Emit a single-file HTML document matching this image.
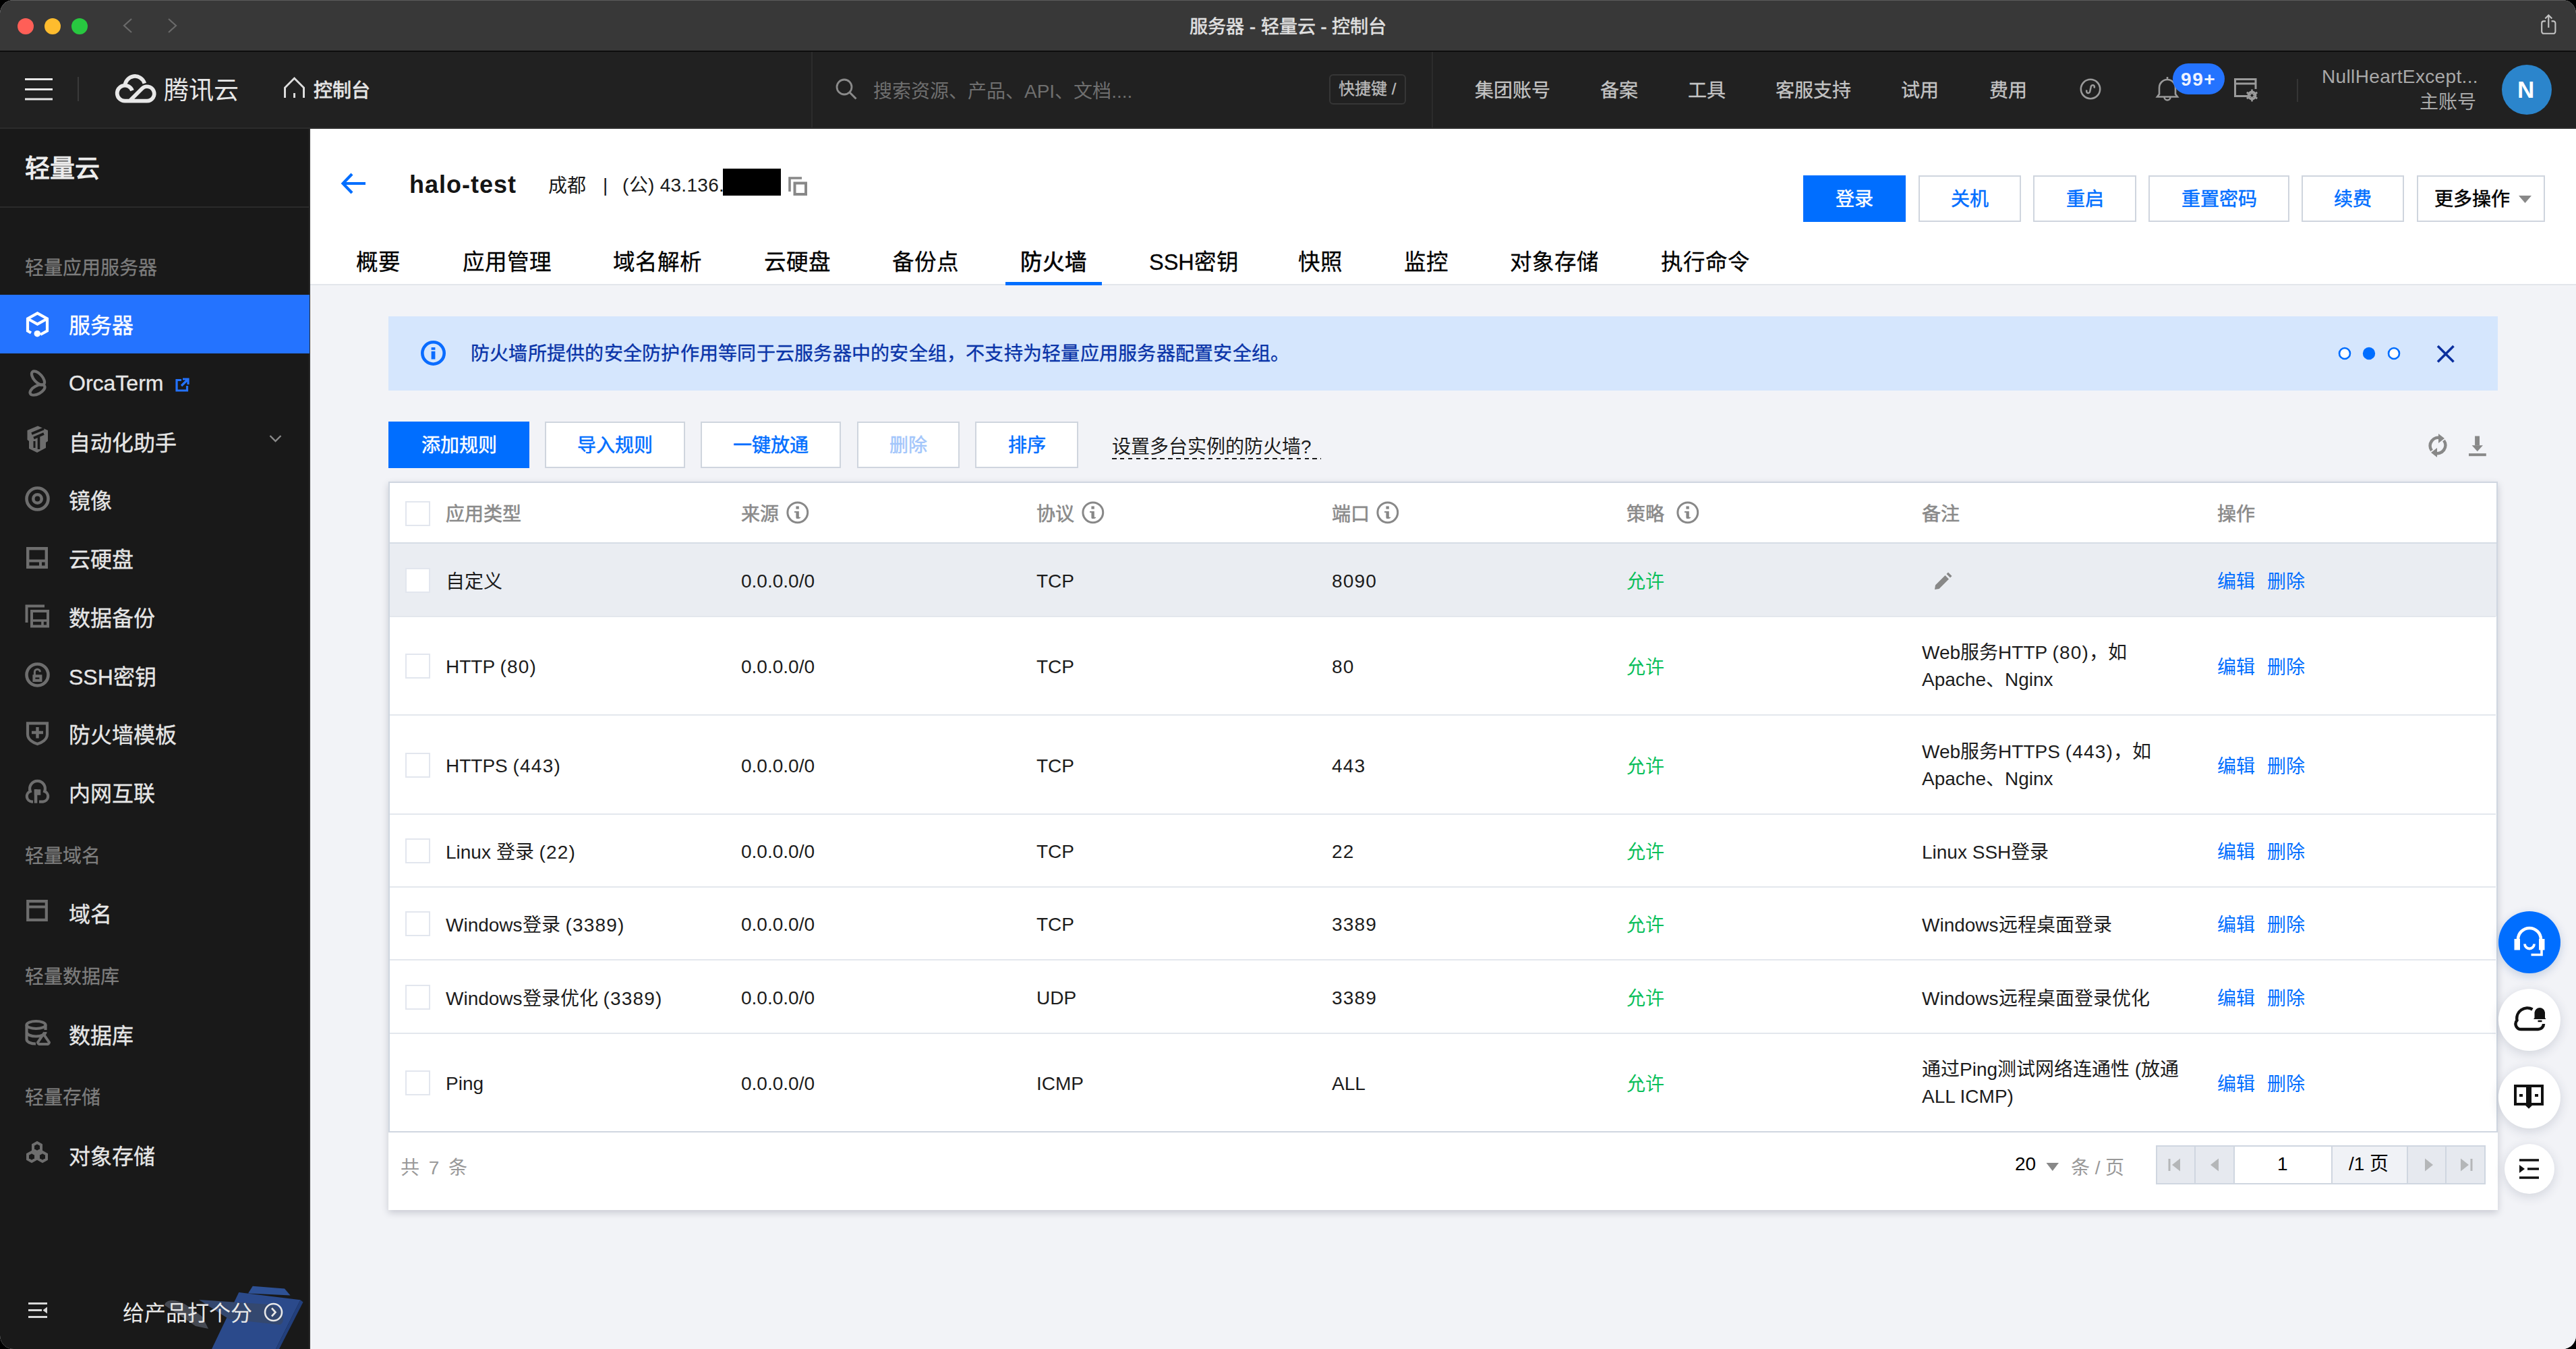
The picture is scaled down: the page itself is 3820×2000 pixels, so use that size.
<!DOCTYPE html>
<html lang="zh-CN">
<head>
<meta charset="utf-8">
<style>
*{box-sizing:border-box;margin:0;padding:0}
html,body{width:3820px;height:2000px;overflow:hidden;background:#000}
body{font-family:"Liberation Sans",sans-serif;position:relative;color:#000;-webkit-text-stroke-width:0}
.a{position:absolute}
.t{position:absolute;white-space:nowrap;line-height:1}
svg{position:absolute;overflow:visible}
/* window */
#win{position:absolute;left:0;top:0;width:3820px;height:2000px;border-radius:20px;overflow:hidden;background:#f2f3f7}
#titlebar{left:0;top:0;width:3820px;height:77px;background:#383838;border-top:1px solid #5c5c5c;border-bottom:2px solid #0d0d0d}
.tl{width:24px;height:24px;border-radius:50%;top:26px}
#topnav{left:0;top:77px;width:3820px;height:113px;background:#212121}
.nav{font-size:28px;color:#c4c4c4;-webkit-text-stroke:0.3px #c4c4c4}
#sidebar{left:0;top:190px;width:460px;height:1810px;background:#191919;border-right:2px solid #2a2a2a}
.grp{font-size:28px;color:#7d7d7d;left:37px;-webkit-text-stroke:0.3px #7d7d7d}
.item{left:0;width:459px;height:87px}
.item .lbl{position:absolute;left:102px;top:30px;font-size:32px;line-height:32px;color:#e8e8e8;white-space:nowrap;-webkit-text-stroke:0.35px currentColor}
.item svg{left:37px;top:25px}
#main{left:460px;top:190px;width:3360px;height:1810px;background:#f2f3f7}

.btn{position:absolute;height:69px;border:2px solid #cfd5de;background:#fff;color:#006eff;font-size:28px;line-height:68px;text-align:center;white-space:nowrap;-webkit-text-stroke:0.5px currentColor}
.btnp{background:#006eff;border-color:#006eff;color:#fff}
.tab{position:absolute;top:373px;font-size:32.5px;line-height:33px;color:#000;white-space:nowrap;-webkit-text-stroke:0.3px #000}
.th{position:absolute;top:749px;font-size:28px;line-height:28px;color:#8a8a8a;-webkit-text-stroke:0.6px #8a8a8a;white-space:nowrap}
.cell{position:absolute;font-size:28px;line-height:28px;color:#1c1c1c;white-space:nowrap}
.grn{color:#0abf5b}
.lnk{color:#006eff}
.cb{position:absolute;left:601px;width:37px;height:37px;border:2px solid #e2e6ee;background:#fff}
.hline{position:absolute;left:578px;width:3123px;height:2px;background:#e3e7ed}
.ii{position:absolute;width:34px;height:34px}
</style>
</head>
<body>
<div id="win">
  <!-- TITLE BAR -->
  <div id="titlebar" class="a">
    <div class="a tl" style="left:26px;background:#ff5f57"></div>
    <div class="a tl" style="left:66px;background:#febc2e"></div>
    <div class="a tl" style="left:106px;background:#28c840"></div>
    <svg width="14" height="22" style="left:182px;top:26px"><path d="M13 1 L2 11 L13 21" fill="none" stroke="#6a6a6a" stroke-width="2.2"/></svg>
    <svg width="14" height="22" style="left:249px;top:26px"><path d="M1 1 L12 11 L1 21" fill="none" stroke="#6a6a6a" stroke-width="2.2"/></svg>
    <div class="t" style="left:1764px;top:26px;font-size:27px;color:#e0e0e0;-webkit-text-stroke:0.6px #e0e0e0;letter-spacing:0.1px">服务器 - 轻量云 - 控制台</div>
    <svg width="28" height="34" style="left:3766px;top:19px"><path d="M9 11.4 H6.2 A3 3 0 0 0 3.2 14.4 V26.8 A3 3 0 0 0 6.2 29.8 H20.4 A3 3 0 0 0 23.4 26.8 V14.4 A3 3 0 0 0 20.4 11.4 H17.6 M13.3 2.5 V21 M8.3 7.5 L13.3 2.5 L18.3 7.5" fill="none" stroke="#c4c4c4" stroke-width="2.1"/></svg>
  </div>
  <!-- TOP NAV -->
  <div id="topnav" class="a">
    <svg width="44" height="36" style="left:36px;top:37px"><path d="M1 3.5H42 M1 18.5H42 M1 33H42" stroke="#e6e6e6" stroke-width="3.2"/></svg>
    <div class="a" style="left:115px;top:37px;width:2px;height:36px;background:#3a3a3a"></div>
    <svg width="80" height="60" style="left:160px;top:23px"><path d="M36 34.3 A11.5 11.5 0 1 0 25 49.7 H58 A10.7 10.7 0 1 0 50.43 31.43 L32.16 49.7 M25.3 27.7 A14.8 14.8 0 0 1 54.3 23.6" fill="none" stroke="#e8e8e8" stroke-width="5.7"/></svg>
    <div class="t" style="left:243px;top:39px;font-size:37px;color:#e8e8e8">腾讯云</div>
    <svg width="36" height="34" style="left:419px;top:37px"><path d="M3.5 31 V16 L17.5 2 L31.5 16 V31 M17.5 24 V31" fill="none" stroke="#dcdcdc" stroke-width="3"/></svg>
    <div class="t" style="left:465px;top:44px;font-size:28px;color:#e6e6e6;-webkit-text-stroke:0.8px #e6e6e6">控制台</div>
    <div class="a" style="left:1203px;top:0;width:2px;height:113px;background:#2c2c2c"></div>
    <svg width="34" height="34" style="left:1239px;top:39px"><circle cx="13" cy="13" r="11" fill="none" stroke="#8a8a8a" stroke-width="2.8"/><path d="M21 21 L30.5 30.5" stroke="#8a8a8a" stroke-width="3"/></svg>
    <div class="t" style="left:1295px;top:45px;font-size:28px;color:#6f6f6f">搜索资源、产品、API、文档....</div>
    <div class="a" style="left:1971px;top:33px;width:114px;height:45px;border:2px solid #363636;border-radius:6px"></div>
    <div class="t" style="left:1985px;top:43px;font-size:24px;color:#bbbbbb;-webkit-text-stroke:0.3px #bbb">快捷键 /</div>
    <div class="a" style="left:2123px;top:0;width:2px;height:113px;background:#2c2c2c"></div>
    <div class="t nav" style="left:2187px;top:44px">集团账号</div>
    <div class="t nav" style="left:2373px;top:44px">备案</div>
    <div class="t nav" style="left:2503px;top:44px">工具</div>
    <div class="t nav" style="left:2633px;top:44px">客服支持</div>
    <div class="t nav" style="left:2819px;top:44px">试用</div>
    <div class="t nav" style="left:2950px;top:44px">费用</div>
    <svg width="34" height="34" style="left:3083px;top:38px"><circle cx="17" cy="17" r="14.2" fill="none" stroke="#9a9a9a" stroke-width="2.6"/><path d="M11.5 18.5 C9.5 23.5 16 25 16.5 19.5 L17.5 14.5 C18 9.5 24.5 10.5 22.5 15.5" fill="none" stroke="#9a9a9a" stroke-width="2.6"/></svg>
    <svg width="34" height="40" style="left:3197px;top:35px"><path d="M17 2 V5.5 M5 27.5 V18 A12 12 0 0 1 29 18 V27.5 L32 31.5 H2 L5 27.5 Z M12.5 32 A4.5 4.5 0 0 0 21.5 32" fill="none" stroke="#9a9a9a" stroke-width="2.6"/></svg>
    <div class="a" style="left:3222px;top:17px;width:77px;height:46px;border-radius:23px;background:#2473ff"></div>
    <div class="t" style="left:3234px;top:27px;font-size:28px;font-weight:bold;color:#eef3ff;letter-spacing:1.6px">99+</div>
    <svg width="40" height="36" style="left:3311px;top:37px"><path d="M25 28.5 H3.5 V3.5 H34 V18 M3.5 10 H34" fill="none" stroke="#9a9a9a" stroke-width="3"/><circle cx="28.5" cy="27.5" r="5.2" fill="none" stroke="#9a9a9a" stroke-width="3.4"/><path d="M28.5 18.5 V36.5 M20.7 23 L36.3 32 M20.7 32 L36.3 23" stroke="#9a9a9a" stroke-width="2.6"/><circle cx="28.5" cy="27.5" r="2" fill="#212121"/></svg>
    <div class="a" style="left:3406px;top:40px;width:2px;height:34px;background:#353535"></div>
    <div class="t" style="left:3443px;top:23px;font-size:28px;color:#a9a9a9;letter-spacing:0.35px">NullHeartExcept...</div>
    <div class="t" style="left:3588px;top:61px;font-size:28px;color:#a9a9a9">主账号</div>
    <div class="a" style="left:3710px;top:19px;width:74px;height:74px;border-radius:50%;background:#2b85cc"></div>
    <div class="t" style="left:3733px;top:38px;font-size:35px;font-weight:bold;color:#fff">N</div>
  </div>
  <!-- SIDEBAR -->
  <div id="sidebar" class="a">
    
    <div class="t" style="left:37px;top:42px;font-size:37px;font-weight:bold;color:#ececec">轻量云</div>
    <div class="a" style="left:0;top:116px;width:459px;height:2px;background:#2a2a2a"></div>
    <div class="t grp" style="top:194px">轻量应用服务器</div>
    <div class="a item" style="top:247.00px;background:#2473ff;"><svg width="40" height="44" style="left:35px;top:22px"><path d="M11 34.5 L6 31.5 V13.5 L20.5 5.5 L35 13.5 V31.5 L25 37 M6 13.5 L20.5 21.5 L35 13.5" fill="none" stroke="#fff" stroke-width="4.2" stroke-linejoin="miter"/><circle cx="20.3" cy="35.7" r="4.8" fill="#fff"/></svg><div class="lbl" style="color:#ffffff">服务器</div></div>
    <div class="a item" style="top:333.75px;"><svg width="40" height="44" style="left:38px;top:21px"><ellipse cx="18.5" cy="15.5" rx="12.5" ry="6.2" transform="rotate(48 18.5 15.5)" fill="none" stroke="#6e6e6e" stroke-width="4.2"/><ellipse cx="17.5" cy="33" rx="12" ry="6" transform="rotate(-28 17.5 33)" fill="none" stroke="#6e6e6e" stroke-width="4.2"/></svg><div class="lbl" style="color:#e6e6e6;top:28px">OrcaTerm</div><svg width="22" height="22" style="left:259px;top:36px"><path d="M10 3.5 H3 V19 H18.5 V12" fill="none" stroke="#2473ff" stroke-width="3.2"/><path d="M12 2 H20 V10 M20 2 L10 12" fill="none" stroke="#2473ff" stroke-width="3.2"/></svg></div>
    <div class="a item" style="top:420.50px;"><svg width="40" height="44" style="left:35px;top:19px"><path d="M21 1.5 L36 8 V24 L33 26 V34 L20 41 L8 35 V24 L5.5 22 V8 Z" fill="#6e6e6e"/><path d="M12 13 L30 5.5 M15 19.5 L30 13 M22.5 16.5 V36" stroke="#191919" stroke-width="3.6"/><path d="M16 24 V34" stroke="#191919" stroke-width="3"/></svg><div class="lbl" style="color:#e6e6e6">自动化助手</div><svg width="20" height="14" style="left:399px;top:33px"><path d="M1.5 2 L9.5 10 L17.5 2" fill="none" stroke="#8a8a8a" stroke-width="2.4"/></svg></div>
    <div class="a item" style="top:507.25px;"><svg width="40" height="40" style="left:36px;top:24px"><circle cx="19.5" cy="18.5" r="16" fill="none" stroke="#6e6e6e" stroke-width="4.6"/><circle cx="19.5" cy="18.5" r="6.2" fill="none" stroke="#6e6e6e" stroke-width="4.6"/></svg><div class="lbl" style="color:#e6e6e6">镜像</div></div>
    <div class="a item" style="top:594.00px;"><svg width="40" height="40" style="left:36px;top:25px"><path d="M5.2 4.2 H32.8 V31.8 H5.2 Z" fill="none" stroke="#6e6e6e" stroke-width="4.4"/><path d="M5 22.5 H33 M24 22.5 V31" stroke="#6e6e6e" stroke-width="4"/></svg><div class="lbl" style="color:#e6e6e6">云硬盘</div></div>
    <div class="a item" style="top:680.75px;"><svg width="40" height="40" style="left:36px;top:24px"><path d="M3.5 28 V3.5 H30" fill="none" stroke="#6e6e6e" stroke-width="4"/><path d="M11 11 H35 V33.5 H11 Z" fill="none" stroke="#6e6e6e" stroke-width="4"/><path d="M11 25 H35 M27 25 V33" stroke="#6e6e6e" stroke-width="3.6"/></svg><div class="lbl" style="color:#e6e6e6">数据备份</div></div>
    <div class="a item" style="top:767.50px;"><svg width="40" height="40" style="left:36px;top:24px"><circle cx="19.5" cy="18.5" r="16" fill="none" stroke="#6e6e6e" stroke-width="4.6"/><path d="M15.4 19 V14.2 A4 4 0 0 1 23.4 14.2" fill="none" stroke="#6e6e6e" stroke-width="3"/><rect x="12.4" y="18.3" width="14" height="10.6" fill="#6e6e6e"/><rect x="16.4" y="22.4" width="6" height="2.4" fill="#191919"/></svg><div class="lbl" style="color:#e6e6e6">SSH密钥</div></div>
    <div class="a item" style="top:854.25px;"><svg width="40" height="40" style="left:36px;top:25px"><path d="M5 3.3 H34 V19.5 C34 28 25 32.5 19.5 34 C14 32.5 5 28 5 19.5 Z" fill="none" stroke="#6e6e6e" stroke-width="4.2"/><path d="M11 17 H28 M19.5 9 V25.5" stroke="#6e6e6e" stroke-width="4.4"/></svg><div class="lbl" style="color:#e6e6e6">防火墙模板</div></div>
    <div class="a item" style="top:941.00px;"><svg width="40" height="40" style="left:36px;top:23px"><path d="M13 34.6 H11.3 A8 8 0 0 1 8.8 19.2 A11.4 11.4 0 1 1 30.2 19.2 A8 8 0 0 1 27.7 34.6 H22" fill="none" stroke="#6e6e6e" stroke-width="4.2"/><rect x="14.8" y="16.3" width="9.5" height="8.5" fill="#6e6e6e"/><rect x="14.8" y="16.3" width="4.5" height="20.4" fill="#6e6e6e"/></svg><div class="lbl" style="color:#e6e6e6">内网互联</div></div>
    <div class="t grp" style="top:1066px">轻量域名</div>
    <div class="a item" style="top:1120px;"><svg width="40" height="40" style="left:36px;top:23px"><path d="M5.2 3.2 H32.8 V30.8 H5.2 Z M5 11.5 H33" fill="none" stroke="#6e6e6e" stroke-width="4.2"/><circle cx="10.5" cy="7.3" r="1.6" fill="#191919"/><circle cx="15.5" cy="7.3" r="1.6" fill="#191919"/></svg><div class="lbl" style="color:#e6e6e6">域名</div></div>
    <div class="t grp" style="top:1245px">轻量数据库</div>
    <div class="a item" style="top:1300px;"><svg width="40" height="40" style="left:36px;top:22px"><ellipse cx="17.5" cy="7.5" rx="14" ry="5.5" fill="none" stroke="#6e6e6e" stroke-width="4.2"/><path d="M3.5 7.5 V29 C3.5 33 10 35.5 17 35.5 M31.5 7.5 V15 M3.5 18 C3.5 22 10 24.5 17.5 24.5 C25 24.5 31.5 22 31.5 18" fill="none" stroke="#6e6e6e" stroke-width="4.2"/><path d="M28.5 21 L37 33.5 A3 3 0 0 1 35 36 H22 A3 3 0 0 1 20 33.5 Z" fill="none" stroke="#6e6e6e" stroke-width="4"/></svg><div class="lbl" style="color:#e6e6e6">数据库</div></div>
    <div class="t grp" style="top:1424px">轻量存储</div>
    <div class="a item" style="top:1479px;"><svg width="40" height="40" style="left:36px;top:23px"><path d="M19 2 L25 5.5 V12.5 L19 16 L13 12.5 V5.5 Z M11 16 L17 19.5 V26.5 L11 30 L5 26.5 V19.5 Z M27 16 L33 19.5 V26.5 L27 30 L21 26.5 V19.5 Z" fill="none" stroke="#6e6e6e" stroke-width="4"/></svg><div class="lbl" style="color:#e6e6e6">对象存储</div></div>
    <svg width="40" height="30" style="left:40px;top:1740px"><path d="M2 2.5 H30 M2 12.5 H22 M2 22.5 H30" stroke="#d8d8d8" stroke-width="3"/><path d="M30 7.5 L23.5 12.5 L30 17.5 Z" fill="#d8d8d8"/></svg>
    <svg width="240" height="110" style="left:220px;top:1700px"><path d="M134.2 26 L225.5 37.3 L189 110 L94 110 Z" fill="#2b4a8b"/><path d="M225.5 37.3 L229.5 40.5 L194 110 L189 110 Z" fill="#223f7c"/><path d="M154.7 16.8 L202 20.5 L210.5 30.5 L148 27.5 Z" fill="#2e5195"/><path d="M75 37 L180 44 C200 46 205 70 195 74 L120 66 Z" fill="#34486f"/><path d="M24 45 C26 36 40 36 55 44 L80 62 L89 80 L70 76 Z" fill="#464a53"/></svg>
    <div class="t" style="left:182px;top:1741px;font-size:32px;color:#e8e8e8">给产品打个分</div>
    <svg width="32" height="32" style="left:390px;top:1740px"><circle cx="15.5" cy="15.5" r="12.5" fill="none" stroke="#e8e8e8" stroke-width="2.6"/><path d="M13 9.5 L18.5 15.5 L13 21.5" fill="none" stroke="#e8e8e8" stroke-width="2.6"/></svg>
  </div>
  <!-- MAIN -->
  <div id="main" class="a"></div>
  <div class="a" style="left:460px;top:190px;width:3360px;height:233px;background:#fff;border-bottom:2px solid #e3e6eb"></div>
  <div class="a" style="left:0;top:189px;width:3820px;height:2px;background:#2c2c2c"></div>
  <svg width="40" height="36" style="left:505px;top:254px"><path d="M37 18 H4 M17 4 L3.5 18 L17 32" fill="none" stroke="#006eff" stroke-width="4.2"/></svg>
  <div class="t" style="left:607px;top:256px;font-size:36px;font-weight:bold;letter-spacing:1px;color:#151515">halo-test</div>
  <div class="t" style="left:813px;top:262px;font-size:28px;color:#1a1a1a">成都</div>
  <div class="t" style="left:894px;top:261px;font-size:28px;color:#1a1a1a">|</div>
  <div class="t" style="left:923px;top:261px;font-size:28px;color:#1a1a1a;letter-spacing:0.3px">(公) 43.136.</div>
  <div class="a" style="left:1072px;top:250px;width:86px;height:40px;background:#000"></div>
  <svg width="30" height="30" style="left:1168px;top:261px"><path d="M3 23 V3 H21" fill="none" stroke="#888" stroke-width="3.6"/><path d="M10.5 10.5 H27 V27 H10.5 Z" fill="none" stroke="#888" stroke-width="4"/></svg>
  <div class="btn btnp" style="left:2674px;top:260px;width:152px">登录</div>
  <div class="btn" style="left:2845px;top:260px;width:152px">关机</div>
  <div class="btn" style="left:3015px;top:260px;width:153px">重启</div>
  <div class="btn" style="left:3186px;top:260px;width:209px">重置密码</div>
  <div class="btn" style="left:3413px;top:260px;width:152px">续费</div>
  <div class="btn" style="left:3584px;top:260px;width:190px;color:#000;text-align:left;padding-left:24px">更多操作</div>
  <svg width="20" height="12" style="left:3735px;top:290px"><path d="M0 0 H19 L9.5 11 Z" fill="#888"/></svg>
  <div class="tab" style="left:528px">概要</div>
  <div class="tab" style="left:686px">应用管理</div>
  <div class="tab" style="left:909px">域名解析</div>
  <div class="tab" style="left:1133px">云硬盘</div>
  <div class="tab" style="left:1323px">备份点</div>
  <div class="tab" style="left:1513px;-webkit-text-stroke:0.7px #000">防火墙</div>
  <div class="tab" style="left:1704px">SSH密钥</div>
  <div class="tab" style="left:1925px">快照</div>
  <div class="tab" style="left:2082px">监控</div>
  <div class="tab" style="left:2239px">对象存储</div>
  <div class="tab" style="left:2463px">执行命令</div>
  <div class="a" style="left:1491px;top:418px;width:143px;height:5px;background:#006eff"></div>
  <!-- banner -->
  <div class="a" style="left:576px;top:469px;width:3128px;height:110px;background:#d5e6fd"></div>
  <svg width="40" height="40" style="left:623px;top:504px"><circle cx="19.5" cy="19.5" r="16.2" fill="none" stroke="#0a6cff" stroke-width="4.6"/><rect x="16.6" y="11" width="5.8" height="3.8" fill="#0a6cff"/><rect x="16.6" y="16.8" width="5.8" height="11.8" fill="#0a6cff"/></svg>
  <div class="t" style="left:698px;top:511px;font-size:28px;color:#0a34a8;letter-spacing:0.24px;-webkit-text-stroke:0.4px #0a34a8">防火墙所提供的安全防护作用等同于云服务器中的安全组，不支持为轻量应用服务器配置安全组。</div>
  <svg width="100" height="24" style="left:3466px;top:512px"><circle cx="11" cy="12" r="8" fill="#fff" stroke="#006eff" stroke-width="2.6"/><circle cx="47" cy="12" r="9.2" fill="#006eff"/><circle cx="84" cy="12" r="8" fill="#fff" stroke="#006eff" stroke-width="2.6"/></svg>
  <svg width="28" height="28" style="left:3613px;top:511px"><path d="M2 2 L25.5 25.5 M25.5 2 L2 25.5" stroke="#0b2f9e" stroke-width="3.6"/></svg>
  <!-- toolbar -->
  <div class="btn btnp" style="left:576px;top:625px;width:209px">添加规则</div>
  <div class="btn" style="left:808px;top:625px;width:208px">导入规则</div>
  <div class="btn" style="left:1039px;top:625px;width:208px">一键放通</div>
  <div class="btn" style="left:1271px;top:625px;width:152px;color:#a3c6fb">删除</div>
  <div class="btn" style="left:1446px;top:625px;width:153px">排序</div>
  <div class="t" style="left:1649px;top:649px;font-size:28px;color:#1a1a1a">设置多台实例的防火墙?</div>
  <div class="a" style="left:1649px;top:679px;width:310px;height:2px;background:repeating-linear-gradient(90deg,#1a1a1a 0 6.6px,transparent 6.6px 11.9px)"></div>
  <svg width="34" height="40" style="left:3598px;top:641px"><path d="M8 27 A12 12 0 0 1 21.5 8.5" fill="none" stroke="#888" stroke-width="4.6"/><path d="M18 2 L27 9 L18 16 Z" fill="#888"/><path d="M26 12 A12 12 0 0 1 12.5 30.5" fill="none" stroke="#888" stroke-width="4.6"/><path d="M16 23 L7 30 L16 37 Z" fill="#888"/></svg>
  <svg width="32" height="34" style="left:3658px;top:644px"><rect x="12.1" y="2.5" width="6.9" height="14" fill="#888"/><path d="M7.6 16.2 H23.9 L15.75 25.2 Z" fill="#888"/><rect x="3" y="28.2" width="25.8" height="4" fill="#888"/></svg>
  <!-- table card -->
  <div class="a" style="left:576px;top:714px;width:3128px;height:1080px;background:#fff;box-shadow:0 4px 10px rgba(54,58,80,0.22)"></div>
  <div class="a" style="left:576px;top:714px;width:3128px;height:965px;border:2px solid #cfd6e0;border-bottom:2px solid #cfd6e0"></div>
  <div class="a" style="left:578px;top:806px;width:3124px;height:108px;background:#eaedf2"></div>
  <div class="a" style="left:578px;top:804px;width:3124px;height:2px;background:#d6dce5"></div>
  <div class="cb" style="top:743px"></div>
  <div class="th" style="left:661px">应用类型</div>
  <div class="th" style="left:1099px">来源</div><svg width="36" height="36" style="left:1166px;top:743px"><circle cx="16.8" cy="16.8" r="14.9" fill="none" stroke="#888" stroke-width="3"/><rect x="14.4" y="7.5" width="4.4" height="4.2" fill="#888"/><path d="M12 14.9 H18.8 V22.5 C18.8 24 19.5 24.3 21.1 23.6 V24.8 C20 26 17.5 26.2 15.6 25.9 C14.7 25.7 14.4 25 14.4 24 V16.9 H12 Z" fill="#888"/></svg>
  <div class="th" style="left:1537px">协议</div><svg width="36" height="36" style="left:1604px;top:743px"><circle cx="16.8" cy="16.8" r="14.9" fill="none" stroke="#888" stroke-width="3"/><rect x="14.4" y="7.5" width="4.4" height="4.2" fill="#888"/><path d="M12 14.9 H18.8 V22.5 C18.8 24 19.5 24.3 21.1 23.6 V24.8 C20 26 17.5 26.2 15.6 25.9 C14.7 25.7 14.4 25 14.4 24 V16.9 H12 Z" fill="#888"/></svg>
  <div class="th" style="left:1975px">端口</div><svg width="36" height="36" style="left:2041px;top:743px"><circle cx="16.8" cy="16.8" r="14.9" fill="none" stroke="#888" stroke-width="3"/><rect x="14.4" y="7.5" width="4.4" height="4.2" fill="#888"/><path d="M12 14.9 H18.8 V22.5 C18.8 24 19.5 24.3 21.1 23.6 V24.8 C20 26 17.5 26.2 15.6 25.9 C14.7 25.7 14.4 25 14.4 24 V16.9 H12 Z" fill="#888"/></svg>
  <div class="th" style="left:2412px">策略</div><svg width="36" height="36" style="left:2486px;top:743px"><circle cx="16.8" cy="16.8" r="14.9" fill="none" stroke="#888" stroke-width="3"/><rect x="14.4" y="7.5" width="4.4" height="4.2" fill="#888"/><path d="M12 14.9 H18.8 V22.5 C18.8 24 19.5 24.3 21.1 23.6 V24.8 C20 26 17.5 26.2 15.6 25.9 C14.7 25.7 14.4 25 14.4 24 V16.9 H12 Z" fill="#888"/></svg>
  <div class="th" style="left:2850px">备注</div>
  <div class="th" style="left:3288px">操作</div>
  <div class="cb" style="top:842px"></div>
  <div class="cell" style="left:661px;top:849px">自定义</div>
  <div class="cell" style="left:1099px;top:848px">0.0.0.0/0</div>
  <div class="cell" style="left:1537px;top:848px">TCP</div>
  <div class="cell" style="left:1975px;top:848px"><span style="letter-spacing:1.2px">8090</span></div>
  <div class="cell grn" style="left:2412px;top:849px">允许</div>
  <svg width="30" height="30" style="left:2866px;top:847px"><path d="M3 27 L4 20.5 L18.5 6 L24 11.5 L9.5 26 Z M20.5 4 L23 1.5 L28.5 7 L26 9.5 Z" fill="#888"/></svg>
  <div class="cell lnk" style="left:3288px;top:849px">编辑</div>
  <div class="cell lnk" style="left:3362px;top:849px">删除</div>
  <div class="hline" style="top:913px"></div>
  <div class="cb" style="top:969px"></div>
  <div class="cell" style="left:661px;top:975px">HTTP <span style="letter-spacing:1.2px">(80)</span></div>
  <div class="cell" style="left:1099px;top:975px">0.0.0.0/0</div>
  <div class="cell" style="left:1537px;top:975px">TCP</div>
  <div class="cell" style="left:1975px;top:975px"><span style="letter-spacing:1.2px">80</span></div>
  <div class="cell grn" style="left:2412px;top:976px">允许</div>
  <div class="cell" style="left:2850px;top:948px;line-height:40px">Web服务HTTP <span style="letter-spacing:1.2px">(80)</span>，如<br>Apache、Nginx</div>
  <div class="cell lnk" style="left:3288px;top:976px">编辑</div>
  <div class="cell lnk" style="left:3362px;top:976px">删除</div>
  <div class="hline" style="top:1059px"></div>
  <div class="cb" style="top:1116px"></div>
  <div class="cell" style="left:661px;top:1122px">HTTPS <span style="letter-spacing:1.2px">(443)</span></div>
  <div class="cell" style="left:1099px;top:1122px">0.0.0.0/0</div>
  <div class="cell" style="left:1537px;top:1122px">TCP</div>
  <div class="cell" style="left:1975px;top:1122px"><span style="letter-spacing:1.2px">443</span></div>
  <div class="cell grn" style="left:2412px;top:1123px">允许</div>
  <div class="cell" style="left:2850px;top:1095px;line-height:40px">Web服务HTTPS <span style="letter-spacing:1.2px">(443)</span>，如<br>Apache、Nginx</div>
  <div class="cell lnk" style="left:3288px;top:1123px">编辑</div>
  <div class="cell lnk" style="left:3362px;top:1123px">删除</div>
  <div class="hline" style="top:1206px"></div>
  <div class="cb" style="top:1243px"></div>
  <div class="cell" style="left:661px;top:1250px">Linux 登录 <span style="letter-spacing:1.2px">(22)</span></div>
  <div class="cell" style="left:1099px;top:1249px">0.0.0.0/0</div>
  <div class="cell" style="left:1537px;top:1249px">TCP</div>
  <div class="cell" style="left:1975px;top:1249px"><span style="letter-spacing:1.2px">22</span></div>
  <div class="cell grn" style="left:2412px;top:1250px">允许</div>
  <div class="cell" style="left:2850px;top:1250px">Linux SSH登录</div>
  <div class="cell lnk" style="left:3288px;top:1250px">编辑</div>
  <div class="cell lnk" style="left:3362px;top:1250px">删除</div>
  <div class="hline" style="top:1314px"></div>
  <div class="cb" style="top:1351px"></div>
  <div class="cell" style="left:661px;top:1358px">Windows登录 <span style="letter-spacing:1.2px">(3389)</span></div>
  <div class="cell" style="left:1099px;top:1357px">0.0.0.0/0</div>
  <div class="cell" style="left:1537px;top:1357px">TCP</div>
  <div class="cell" style="left:1975px;top:1357px"><span style="letter-spacing:1.2px">3389</span></div>
  <div class="cell grn" style="left:2412px;top:1358px">允许</div>
  <div class="cell" style="left:2850px;top:1358px">Windows远程桌面登录</div>
  <div class="cell lnk" style="left:3288px;top:1358px">编辑</div>
  <div class="cell lnk" style="left:3362px;top:1358px">删除</div>
  <div class="hline" style="top:1422px"></div>
  <div class="cb" style="top:1460px"></div>
  <div class="cell" style="left:661px;top:1467px">Windows登录优化 <span style="letter-spacing:1.2px">(3389)</span></div>
  <div class="cell" style="left:1099px;top:1466px">0.0.0.0/0</div>
  <div class="cell" style="left:1537px;top:1466px">UDP</div>
  <div class="cell" style="left:1975px;top:1466px"><span style="letter-spacing:1.2px">3389</span></div>
  <div class="cell grn" style="left:2412px;top:1467px">允许</div>
  <div class="cell" style="left:2850px;top:1467px">Windows远程桌面登录优化</div>
  <div class="cell lnk" style="left:3288px;top:1467px">编辑</div>
  <div class="cell lnk" style="left:3362px;top:1467px">删除</div>
  <div class="hline" style="top:1531px"></div>
  <div class="cb" style="top:1587px"></div>
  <div class="cell" style="left:661px;top:1593px">Ping</div>
  <div class="cell" style="left:1099px;top:1593px">0.0.0.0/0</div>
  <div class="cell" style="left:1537px;top:1593px">ICMP</div>
  <div class="cell" style="left:1975px;top:1593px">ALL</div>
  <div class="cell grn" style="left:2412px;top:1594px">允许</div>
  <div class="cell" style="left:2850px;top:1566px;line-height:40px">通过Ping测试网络连通性 (放通<br>ALL ICMP)</div>
  <div class="cell lnk" style="left:3288px;top:1594px">编辑</div>
  <div class="cell lnk" style="left:3362px;top:1594px">删除</div>
  <div class="t" style="left:594px;top:1718px;font-size:28px;color:#999;word-spacing:6px">共 7 条</div>
  <div class="t" style="left:2988px;top:1712px;font-size:28px;color:#000">20</div>
  <svg width="20" height="14" style="left:3034px;top:1723px"><path d="M0.5 1 H19 L9.75 13 Z" fill="#888"/></svg>
  <div class="t" style="left:3071px;top:1718px;font-size:28px;color:#999">条 / 页</div>
  <div class="a" style="left:3197px;top:1698px;width:489px;height:58px;border:2px solid #cfd6e0;background:#e6e9ef"></div>
  <div class="a" style="left:3312px;top:1700px;width:147px;height:54px;background:#fff;border-left:2px solid #cfd6e0;border-right:2px solid #cfd6e0"></div>
  <div class="a" style="left:3459px;top:1700px;width:112px;height:54px;background:#f0f2f6;border-right:2px solid #cfd6e0"></div>
  <div class="a" style="left:3254px;top:1700px;width:2px;height:54px;background:#cfd6e0"></div>
  <div class="a" style="left:3626px;top:1700px;width:2px;height:54px;background:#cfd6e0"></div>
  <svg width="24" height="24" style="left:3214px;top:1715px"><path d="M3 3 V21" stroke="#b4b6b8" stroke-width="3"/><path d="M19 2.5 V21.5 L7 12 Z" fill="#b4b6b8"/></svg>
  <svg width="24" height="24" style="left:3273px;top:1715px"><path d="M17 2.5 V21.5 L5 12 Z" fill="#b4b6b8"/></svg>
  <div class="t" style="left:3377px;top:1712px;font-size:28px;color:#000">1</div>
  <div class="t" style="left:3483px;top:1712px;font-size:28px;color:#000">/1 页</div>
  <svg width="24" height="24" style="left:3590px;top:1715px"><path d="M6 2.5 V21.5 L18 12 Z" fill="#b4b6b8"/></svg>
  <svg width="24" height="24" style="left:3645px;top:1715px"><path d="M20 3 V21" stroke="#b4b6b8" stroke-width="3"/><path d="M4 2.5 V21.5 L16 12 Z" fill="#b4b6b8"/></svg>
  <!-- floating -->
  <div class="a" style="left:3705px;top:1351px;width:92px;height:92px;border-radius:50%;background:#006eff;box-shadow:0 4px 14px rgba(0,60,140,0.2)"></div>
  <svg width="50" height="50" style="left:3726px;top:1372px"><path d="M8 26 V21 A17 17 0 0 1 42 21 V26" fill="none" stroke="#fff" stroke-width="4.6"/><rect x="2.5" y="20" width="8.5" height="16.5" fill="#fff"/><rect x="39" y="20" width="8.5" height="16.5" fill="#fff"/><path d="M18 27.5 A7 7 0 0 0 32 27.5" fill="none" stroke="#fff" stroke-width="3.8"/><path d="M43 35 V43.5 H27.5" fill="none" stroke="#fff" stroke-width="3.6"/></svg>
  <div class="a" style="left:3705px;top:1466px;width:92px;height:92px;border-radius:50%;background:#fff;box-shadow:0 4px 16px rgba(40,50,80,0.16)"></div>
  <svg width="50" height="50" style="left:3726px;top:1487px"><path d="M46 31 A8 8 0 0 1 38 39 H12.5 A8 8 0 0 1 6.5 25.7 A15.5 15.5 0 0 1 29.5 9.5" fill="none" stroke="#111" stroke-width="4.4"/><path d="M32.5 22 V14 A7.8 7.8 0 0 1 48 14 V22 L49.5 24 H31 Z" fill="#111"/><rect x="37.5" y="25.6" width="6" height="2.6" fill="#111"/><path d="M30 22 H 50" stroke="#fff" stroke-width="0"/></svg>
  <div class="a" style="left:3705px;top:1581px;width:92px;height:92px;border-radius:50%;background:#fff;box-shadow:0 4px 16px rgba(40,50,80,0.16)"></div>
  <svg width="50" height="50" style="left:3726px;top:1602px"><path d="M4 8 H22 V35 H4 Z M26 8 H44 V35 H26 Z" fill="none" stroke="#111" stroke-width="4"/><path d="M4 35 H20 L24 39 L28 35 H44" fill="none" stroke="#111" stroke-width="4"/><rect x="10" y="20" width="5" height="4" fill="#111"/><rect x="33" y="20" width="5" height="4" fill="#111"/></svg>
  <div class="a" style="left:3714px;top:1696px;width:74px;height:74px;border-radius:50%;background:#fff;box-shadow:0 4px 16px rgba(40,50,80,0.16)"></div>
  <svg width="40" height="40" style="left:3731px;top:1713px"><path d="M5 7 H34 M17 20 H34 M5 33 H34" stroke="#111" stroke-width="3.4"/><path d="M5 14 L13 20 L5 26 Z" fill="#111"/></svg>

</div>
</body>
</html>
